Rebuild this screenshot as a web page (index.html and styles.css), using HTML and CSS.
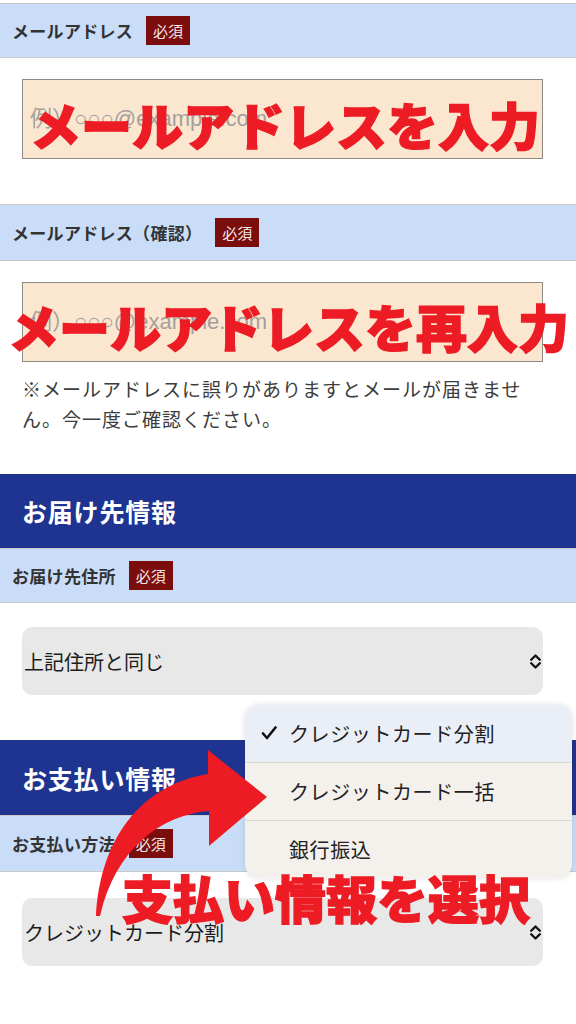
FILE: index.html
```html
<!DOCTYPE html>
<html lang="ja">
<head>
    <meta charset="UTF-8">
    <meta name="viewport" content="width=device-width, initial-scale=1.0">
    <title>ご注文情報</title>
    <link rel="stylesheet" href="styles.css">
</head>
<body>
<div class="page">
    <div class="label-bar">
        <span class="label-text">メールアドレス</span>
        <span class="req">必須</span>
    </div>
    <div class="field field-mail">
        <input class="text-input" type="email" placeholder="例）○○○@example.com">
        <p class="callout callout-mail">メールアドレスを入力</p>
    </div>

    <div class="label-bar label-tall">
        <span class="label-text">メールアドレス（確認）</span>
        <span class="req">必須</span>
    </div>
    <div class="field field-confirm">
        <input class="text-input" type="email" placeholder="例）○○○@example.com">
        <p class="note">※メールアドレスに誤りがありますとメールが届きません。今一度ご確認ください。</p>
        <p class="callout callout-confirm">メールアドレスを再入力</p>
    </div>

    <h2 class="section-title">お届け先情報</h2>
    <div class="label-bar">
        <span class="label-text">お届け先住所</span>
        <span class="req">必須</span>
    </div>
    <div class="field field-select">
        <div class="select">
            <span>上記住所と同じ</span>
            <svg class="chevrons" width="11" height="17" viewBox="0 0 11 17"><path d="M1.2 6.8 L5.5 2.5 L9.8 6.8 M1.2 10.2 L5.5 14.5 L9.8 10.2" fill="none" stroke="#111" stroke-width="2.3" stroke-linecap="round" stroke-linejoin="round"/></svg>
        </div>
    </div>

    <h2 class="section-title section-pay">お支払い情報</h2>
    <div class="label-bar label-tall">
        <span class="label-text">お支払い方法</span>
        <span class="req">必須</span>
    </div>
    <div class="field field-select field-last">
        <div class="select">
            <span>クレジットカード分割</span>
            <svg class="chevrons" width="11" height="17" viewBox="0 0 11 17"><path d="M1.2 6.8 L5.5 2.5 L9.8 6.8 M1.2 10.2 L5.5 14.5 L9.8 10.2" fill="none" stroke="#111" stroke-width="2.3" stroke-linecap="round" stroke-linejoin="round"/></svg>
        </div>
    </div>

    <!-- open picker for the payment select -->
    <ul class="picker">
        <li class="picker-item selected">
            <svg class="check" width="16" height="16" viewBox="0 0 16 16"><path d="M2 8.5 L6 13 L14.5 2.5" fill="none" stroke="#111" stroke-width="2.6" stroke-linecap="round" stroke-linejoin="round"/></svg>
            クレジットカード分割
        </li>
        <li class="picker-item">クレジットカード一括</li>
        <li class="picker-item">銀行振込</li>
    </ul>

    <svg class="arrow" width="576" height="1024" viewBox="0 0 576 1024">
        <path d="M96 916 C100 840, 140 785, 208 774 L208 750 L267 797 L209 846 L209 811 C160 815, 115 850, 100 916 Z" fill="#ed1c24"/>
    </svg>
    <p class="callout callout-pay">支払い情報を選択</p>
</div>
</body>
</html>
```

FILE: styles.css
```css
body {
    margin: 0;
    font-family: "Noto Sans CJK JP", "Noto Sans", sans-serif;
    color: #333;
    background: #fff;
}
.page {
    position: relative;
    width: 576px;
    height: 1024px;
    overflow: hidden;
    padding-top: 3px;
    box-sizing: border-box;
}

/* light blue label rows */
.label-bar {
    display: flex;
    align-items: center;
    height: 53px;
    padding-left: 12px;
    background: #c9ddf9;
    border-top: 1px solid #c9c9c9;
    border-bottom: 1px solid #c9c9c9;
}
.label-tall {
    height: 55px;
}
.label-text {
    font-size: 17px;
    font-weight: 700;
    letter-spacing: 0.3px;
    color: #333;
}
.req {
    margin-left: 13px;
    padding: 3px 7px;
    background: #7b0d0d;
    color: #f2eaea;
    font-size: 15px;
    line-height: 23px;
}

/* field blocks */
.field {
    position: relative;
    padding: 0 33px 0 22px;
}
.field-mail {
    padding-top: 21px;
    padding-bottom: 45px;
}
.field-confirm {
    padding-top: 21px;
    padding-bottom: 40px;
}
.field-select {
    padding-top: 24px;
    padding-bottom: 45px;
}
.field-last {
    padding-top: 26px;
}
.text-input {
    display: block;
    width: 100%;
    height: 80px;
    box-sizing: border-box;
    padding: 0 7px;
    background: #fbe6cf;
    border: 1px solid #8f8a86;
    font-family: "Liberation Sans", "Noto Sans CJK JP", sans-serif;
    font-size: 22px;
}
.text-input::placeholder {
    color: #a3a09d;
}
.note {
    margin: 12px 0 0;
    max-width: 505px;
    font-size: 19px;
    line-height: 30px;
    letter-spacing: 1px;
    color: #3c3c3c;
}

.section-title {
    display: flex;
    align-items: center;
    margin: 0;
    height: 74px;
    padding-left: 22px;
    background: #1f3491;
    color: #fff;
    font-size: 25px;
    font-weight: 700;
    letter-spacing: 0.8px;
}
.section-pay {
    height: 75px;
}

.select {
    display: flex;
    align-items: center;
    justify-content: space-between;
    height: 68px;
    padding: 0 2px 0 2px;
    background: #e8e8e8;
    border-radius: 10px;
    font-size: 20px;
    color: #1c1c1c;
}

/* iOS-style option list */
.picker {
    position: absolute;
    left: 245px;
    top: 705px;
    width: 327px;
    margin: 0;
    padding: 0;
    list-style: none;
    border-radius: 14px;
    overflow: hidden;
    background: #f4f0ec;
    box-shadow: 0 0 6px rgba(0, 0, 0, 0.12);
}
.picker-item {
    position: relative;
    display: flex;
    align-items: center;
    height: 57px;
    padding-left: 44px;
    font-size: 20px;
    letter-spacing: 0.6px;
    color: #222;
    border-top: 1px solid #dcd7d3;
}
.picker-item:first-child {
    border-top: none;
}
.picker-item.selected {
    background: #eaeef6;
}
.check {
    position: absolute;
    left: 16px;
    top: 20px;
}

/* red annotations */
.arrow {
    position: absolute;
    left: 0;
    top: 0;
    pointer-events: none;
}
.callout {
    position: absolute;
    margin: 0;
    font-size: 51px;
    font-weight: 900;
    line-height: 51px;
    color: #ed1c24;
    -webkit-text-stroke: 1.4px #ed1c24;
    white-space: nowrap;
}
.callout-mail {
    left: 30px;
    top: 41px;
}
.callout-confirm {
    left: 8px;
    top: 40px;
}
.callout-pay {
    left: 122px;
    top: 872px;
}
```
